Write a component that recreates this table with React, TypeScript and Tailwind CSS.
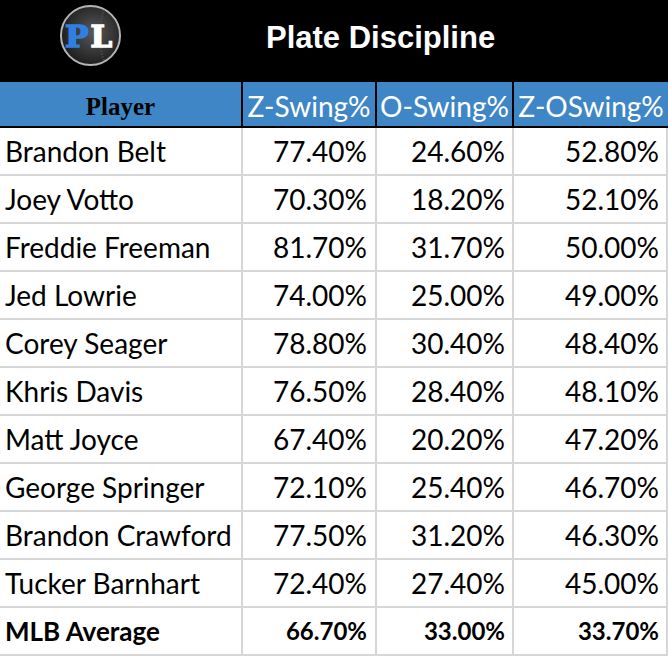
const rows: [string, string, string, string][] = [
  ["Brandon Belt", "77.40%", "24.60%", "52.80%"],
  ["Joey Votto", "70.30%", "18.20%", "52.10%"],
  ["Freddie Freeman", "81.70%", "31.70%", "50.00%"],
  ["Jed Lowrie", "74.00%", "25.00%", "49.00%"],
  ["Corey Seager", "78.80%", "30.40%", "48.40%"],
  ["Khris Davis", "76.50%", "28.40%", "48.10%"],
  ["Matt Joyce", "67.40%", "20.20%", "47.20%"],
  ["George Springer", "72.10%", "25.40%", "46.70%"],
  ["Brandon Crawford", "77.50%", "31.20%", "46.30%"],
  ["Tucker Barnhart", "72.40%", "27.40%", "45.00%"],
];

function Logo() {
  return (
    <svg width="63" height="63" viewBox="0 0 64 64">
      <defs>
        <radialGradient id="ball" cx="0.55" cy="0.45" r="0.6">
          <stop offset="0" stopColor="#5a5a5a" />
          <stop offset="0.6" stopColor="#333" />
          <stop offset="1" stopColor="#1a1a1a" />
        </radialGradient>
      </defs>
      <circle cx="32" cy="32" r="30" fill="url(#ball)" stroke="#b5b5b5" strokeWidth="2" />
      <path d="M46 6 C40 20 40 44 46 58" fill="none" stroke="#555" strokeWidth="2" strokeDasharray="1 2" />
      <text
        x="6"
        y="44"
        fontFamily="'DejaVu Serif', serif"
        fontWeight="bold"
        fontSize="31"
        fill="#2f7fe0"
        stroke="#2f7fe0"
        strokeWidth="1.6"
        textLength="24"
        lengthAdjust="spacingAndGlyphs"
      >
        P
      </text>
      <text
        x="32"
        y="44"
        fontFamily="'DejaVu Serif', serif"
        fontWeight="bold"
        fontSize="31"
        fill="#ffffff"
        stroke="#ffffff"
        strokeWidth="1.6"
        textLength="22"
        lengthAdjust="spacingAndGlyphs"
      >
        L
      </text>
    </svg>
  );
}

export default function App() {
  const cell = "h-[48px] border-b-2 border-r-2 border-[#d6d6d6] flex items-center";
  const head = "h-[46px] bg-[#3f86c6] border-b-2 border-black flex items-center justify-center text-white pt-[4px]";
  return (
    <div className="w-[668px] h-[656px] overflow-hidden bg-white font-['Lato',sans-serif] text-[28px] text-black">
      {/* title bar */}
      <div className="h-[82px] bg-black flex items-center">
        <div className="w-[243px] flex pl-[59px] pb-[12px]">
          <Logo />
        </div>
        <div className="pl-[23px] pb-[6px] text-white font-bold text-[31px] font-['Liberation_Sans',Arial,sans-serif]">
          Plate Discipline
        </div>
      </div>

      <div className="grid grid-cols-[243px_134px_137px_1fr]">
        {/* header */}
        <div className="h-[46px] bg-[#3f86c6] border-r-2 border-b-2 border-black flex items-end justify-center pb-[1px] font-bold text-[25px] font-['Liberation_Serif','Times_New_Roman',serif]">
          Player
        </div>
        <div className={`${head} border-r-2`}>Z-Swing%</div>
        <div className={`${head} border-r-2`}>O-Swing%</div>
        <div className={head}>Z-OSwing%</div>

        {rows.map((r) => (
          <div key={r[0]} className="contents">
            <div className={`${cell} pl-[5px]`}>{r[0]}</div>
            <div className={`${cell} justify-end pr-[8px]`}>{r[1]}</div>
            <div className={`${cell} justify-end pr-[7px]`}>{r[2]}</div>
            <div className={`${cell} justify-end pr-[7px]`}>{r[3]}</div>
          </div>
        ))}

        <div className={`${cell} pl-[5px] font-bold text-[26px]`}>MLB Average</div>
        <div className={`${cell} justify-end pr-[8px] font-bold text-[24px]`}>66.70%</div>
        <div className={`${cell} justify-end pr-[7px] font-bold text-[24px]`}>33.00%</div>
        <div className={`${cell} justify-end pr-[7px] font-bold text-[24px]`}>33.70%</div>
      </div>
    </div>
  );
}
